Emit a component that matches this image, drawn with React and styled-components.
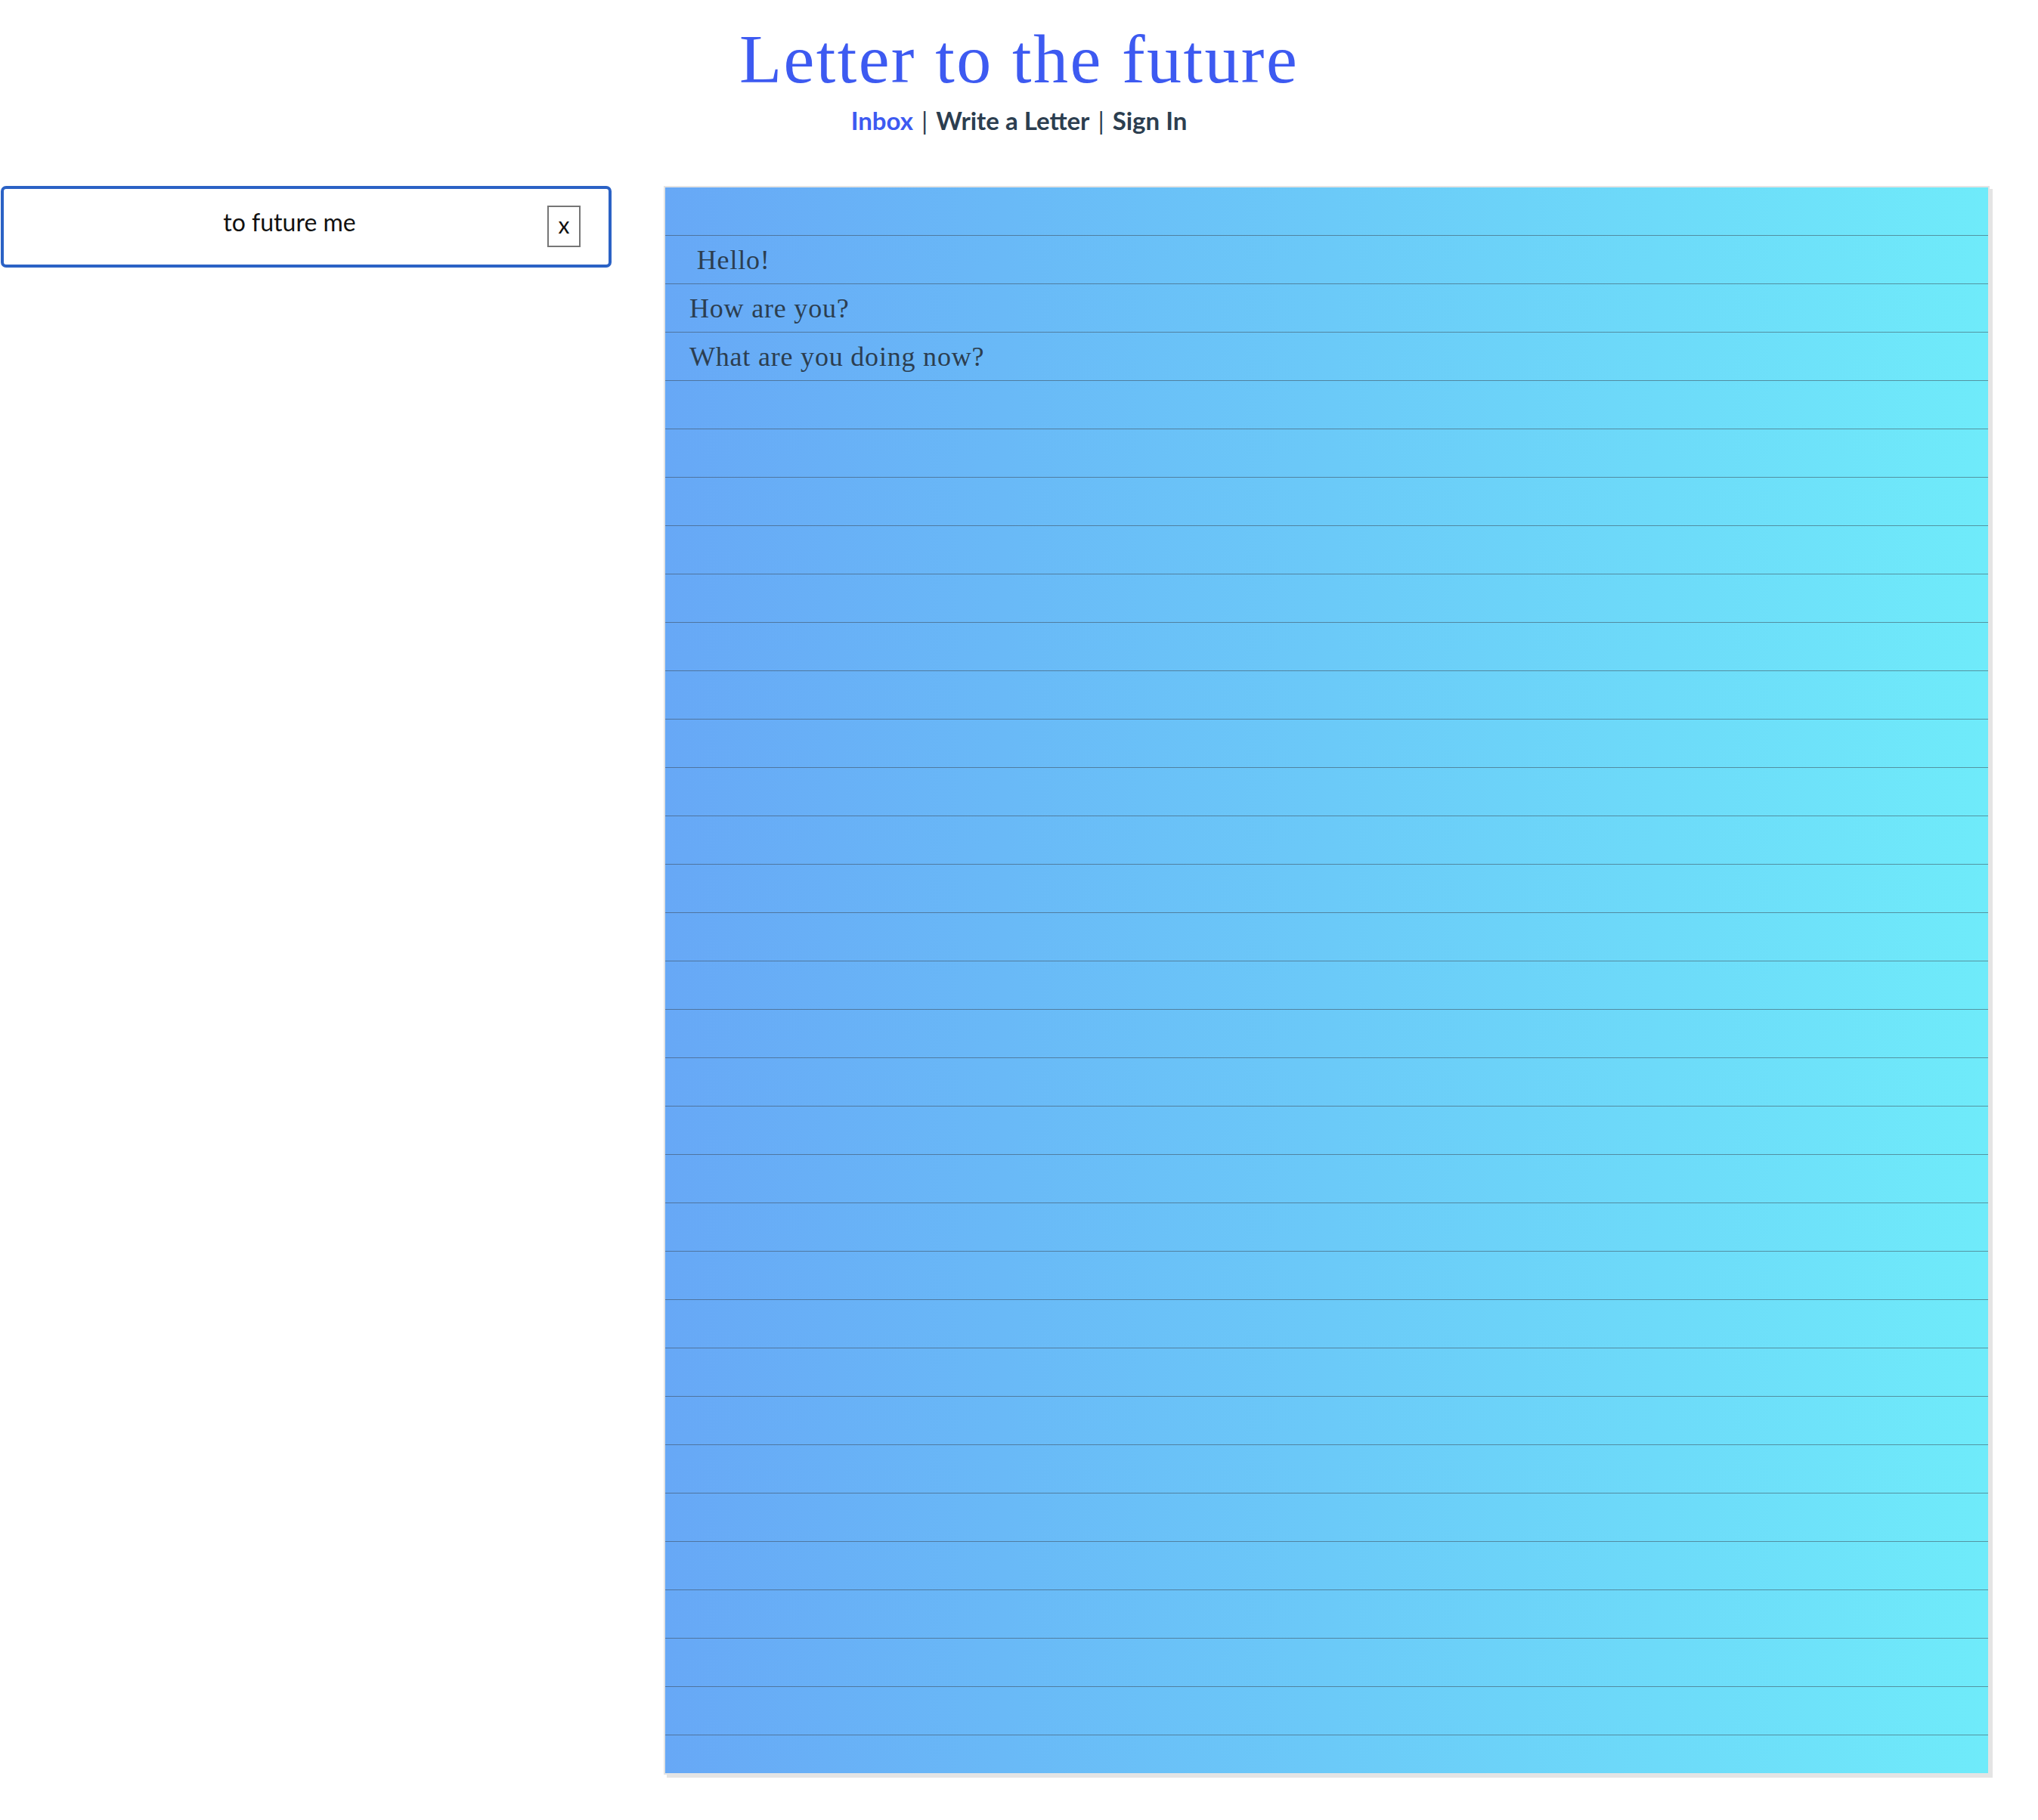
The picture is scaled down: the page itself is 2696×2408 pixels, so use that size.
import React from "react";
import styled, { createGlobalStyle } from "styled-components";

const GlobalStyle = createGlobalStyle`
  html, body {
    margin: 0;
    padding: 0;
    background: #ffffff;
  }
  body {
    font-family: Lato, "Noto Sans", sans-serif;
  }
`;

const Page = styled.div`
  width: 2696px;
  min-height: 2408px;
`;

const Header = styled.header`
  display: flex;
  flex-direction: column;
  align-items: center;
`;

const Title = styled.h1`
  margin: 32px 0 0;
  font-family: "Liberation Serif", "Times New Roman", serif;
  font-weight: 400;
  font-size: 92px;
  line-height: 92px;
  letter-spacing: 2.4px;
  color: #3d5af1;
`;

const Nav = styled.nav`
  margin-top: 16px;
  display: flex;
  align-items: baseline;
  gap: 11px;
  font-family: Lato, "Noto Sans", sans-serif;
  font-size: 33px;
  line-height: 1.2;
`;

const NavLink = styled.a`
  font-weight: 700;
  color: ${(p) => (p.$active ? "#3d5af1" : "#2c3e50")};
  text-decoration: none;
  cursor: pointer;
`;

const Divider = styled.span`
  font-weight: 400;
  color: #2c3e50;
`;

const Main = styled.main`
  display: flex;
  align-items: flex-start;
  gap: 69px;
  margin-top: 66px;
  padding-left: 1px;
`;

const Sidebar = styled.aside`
  width: 808px;
  flex-shrink: 0;
`;

const LetterItem = styled.div`
  box-sizing: border-box;
  height: 108px;
  display: flex;
  align-items: center;
  padding: 0 37px;
  border: 4px solid #2b62c5;
  border-radius: 7px;
  background: #ffffff;
`;

const LetterLabel = styled.span`
  flex: 1;
  text-align: center;
  font-family: Lato, "Noto Sans", sans-serif;
  font-size: 32px;
  font-weight: 400;
  color: #111111;
  padding-bottom: 12px;
`;

const CloseButton = styled.button`
  box-sizing: border-box;
  width: 44px;
  height: 55px;
  padding: 0 0 6px;
  border: 2px solid #767676;
  background: #ffffff;
  font-family: Lato, "Noto Sans", sans-serif;
  font-size: 30px;
  line-height: 1;
  color: #111111;
  cursor: pointer;
`;

const Paper = styled.div`
  box-sizing: border-box;
  width: 1754px;
  height: 2102px;
  flex-shrink: 0;
  padding: 64px 32px 0;
  border: 2px solid #e4e4e4;
  box-shadow: 4px 4px 0 #e4e4e4;
  overflow: hidden;
  background-image: repeating-linear-gradient(
      to bottom,
      transparent 0,
      transparent 63px,
      rgba(55, 65, 75, 0.5) 63px,
      rgba(55, 65, 75, 0.5) 64px
    ),
    linear-gradient(to right, #67a8f6, #6febfa);
`;

const Line = styled.div`
  height: 64px;
  font-family: "Liberation Serif", "Times New Roman", serif;
  font-size: 36px;
  line-height: 64px;
  letter-spacing: 0.8px;
  color: #2c3e50;
  white-space: pre;
`;

const lines = [" Hello!", "How are you?", "What are you doing now?"];

export default function App() {
  return (
    <Page>
      <GlobalStyle />
      <Header>
        <Title>Letter to the future</Title>
        <Nav>
          <NavLink $active>Inbox</NavLink>
          <Divider>|</Divider>
          <NavLink>Write a Letter</NavLink>
          <Divider>|</Divider>
          <NavLink>Sign In</NavLink>
        </Nav>
      </Header>
      <Main>
        <Sidebar>
          <LetterItem>
            <LetterLabel>to future me</LetterLabel>
            <CloseButton>x</CloseButton>
          </LetterItem>
        </Sidebar>
        <Paper>
          {lines.map((text, i) => (
            <Line key={i}>{text}</Line>
          ))}
        </Paper>
      </Main>
    </Page>
  );
}
